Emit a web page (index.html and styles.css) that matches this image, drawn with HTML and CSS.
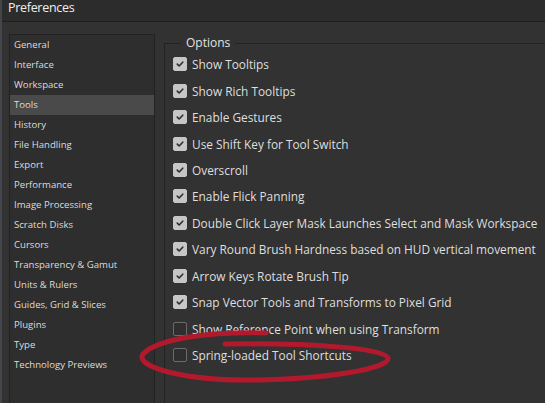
FILE: index.html
```html
<!DOCTYPE html>
<html>
<head>
<meta charset="utf-8">
<link rel="stylesheet" href="styles.css">
</head>
<body>
<div class="window">
  <div class="titlebar">Preferences</div>
  <div class="main">
    <ul class="nav">
      <li>General</li>
      <li>Interface</li>
      <li>Workspace</li>
      <li class="active">Tools</li>
      <li>History</li>
      <li>File Handling</li>
      <li>Export</li>
      <li>Performance</li>
      <li>Image Processing</li>
      <li>Scratch Disks</li>
      <li>Cursors</li>
      <li>Transparency &amp; Gamut</li>
      <li>Units &amp; Rulers</li>
      <li>Guides, Grid &amp; Slices</li>
      <li>Plugins</li>
      <li>Type</li>
      <li>Technology Previews</li>
    </ul>
    <fieldset class="options">
      <legend>Options</legend>
      <div class="row"><span class="cb on"><svg viewBox="0 0 14 14"><path d="M3.8 7.2 L6 9.3 L10.2 4.9"/></svg></span><span class="lbl">Show Tooltips</span></div>
      <div class="row"><span class="cb on"><svg viewBox="0 0 14 14"><path d="M3.8 7.2 L6 9.3 L10.2 4.9"/></svg></span><span class="lbl">Show Rich Tooltips</span></div>
      <div class="row"><span class="cb on"><svg viewBox="0 0 14 14"><path d="M3.8 7.2 L6 9.3 L10.2 4.9"/></svg></span><span class="lbl">Enable Gestures</span></div>
      <div class="row"><span class="cb on"><svg viewBox="0 0 14 14"><path d="M3.8 7.2 L6 9.3 L10.2 4.9"/></svg></span><span class="lbl">Use Shift Key for Tool Switch</span></div>
      <div class="row"><span class="cb on"><svg viewBox="0 0 14 14"><path d="M3.8 7.2 L6 9.3 L10.2 4.9"/></svg></span><span class="lbl">Overscroll</span></div>
      <div class="row"><span class="cb on"><svg viewBox="0 0 14 14"><path d="M3.8 7.2 L6 9.3 L10.2 4.9"/></svg></span><span class="lbl">Enable Flick Panning</span></div>
      <div class="row"><span class="cb on"><svg viewBox="0 0 14 14"><path d="M3.8 7.2 L6 9.3 L10.2 4.9"/></svg></span><span class="lbl">Double Click Layer Mask Launches Select and Mask Workspace</span></div>
      <div class="row"><span class="cb on"><svg viewBox="0 0 14 14"><path d="M3.8 7.2 L6 9.3 L10.2 4.9"/></svg></span><span class="lbl">Vary Round Brush Hardness based on HUD vertical movement</span></div>
      <div class="row"><span class="cb on"><svg viewBox="0 0 14 14"><path d="M3.8 7.2 L6 9.3 L10.2 4.9"/></svg></span><span class="lbl">Arrow Keys Rotate Brush Tip</span></div>
      <div class="row"><span class="cb on"><svg viewBox="0 0 14 14"><path d="M3.8 7.2 L6 9.3 L10.2 4.9"/></svg></span><span class="lbl">Snap Vector Tools and Transforms to Pixel Grid</span></div>
      <div class="row"><span class="cb"></span><span class="lbl">Show Reference Point when using Transform</span></div>
      <div class="row"><span class="cb"></span><span class="lbl">Spring-loaded Tool Shortcuts</span></div>
    </fieldset>
  </div>
  <svg class="mark" viewBox="0 0 545 403" width="545" height="403">
    <path class="ink" d="M266 333 C 215 331, 158 338, 143 354 C 134 367, 185 381, 255 380 C 325 379, 390 369, 388 358 C 386 348, 310 343, 225 344"/>
  </svg>
</div>
</body>
</html>
```

FILE: styles.css
```css
html, body {
  margin: 0;
  padding: 0;
  background: #323232;
  overflow: hidden;
}
.window {
  position: relative;
  width: 545px;
  height: 403px;
  box-sizing: border-box;
  border-left: 2px solid #44464c;
  overflow: hidden;
  font-family: "Open Sans", "Noto Sans", sans-serif;
  color: #dedede;
}
.titlebar {
  height: 21px;
  border-bottom: 1px solid #1e1e1e;
  background: #2c2c2c;
  box-sizing: content-box;
  padding-left: 6px;
  font-size: 12.5px;
  letter-spacing: -0.3px;
  line-height: 16px;
  color: #efefef;
}
.main {
  display: flex;
  height: 381px;
  align-items: stretch;
}
.nav {
  list-style: none;
  margin: 12px 0 -20px 7px;
  padding: 0;
  width: 146px;
  box-sizing: border-box;
  border: 1px solid #222;
  background: #2e2e2e;
  font-size: 9.6px;
  flex: none;
}
.nav li {
  height: 20px;
  line-height: 19px;
  padding-left: 4px;
  color: #dcdcdc;
}
.nav li.active {
  background: #4a4a4a;
}
.options {
  flex: none;
  width: 420px;
  margin: 13px 0 -20px 9px;
  padding: 0 0 0 8px;
  border: 1px solid #222;
  min-width: 0;
}
.options legend {
  margin-left: 8px;
  padding: 0 5px;
  font-size: 12px;
  line-height: 16px;
  color: #e2e2e2;
}
.row {
  height: 26.45px;
  display: flex;
  align-items: center;
  gap: 5px;
  font-size: 11.85px;
  white-space: nowrap;
}
.cb {
  width: 14px;
  height: 14px;
  box-sizing: border-box;
  border-radius: 2px;
  border: 1px solid #6b6b6b;
  background: #2f2f2f;
  flex: none;
  display: block;
}
.cb.on {
  background: #c6c6c6;
  border-color: #c6c6c6;
}
.cb svg {
  display: block;
  width: 12px;
  height: 12px;
}
.cb svg path {
  fill: none;
  stroke: #2e2e2e;
  stroke-width: 1.9;
  stroke-linecap: round;
  stroke-linejoin: round;
}
.lbl {
  color: #dfdfdf;
}
.mark {
  position: absolute;
  left: -2px;
  top: 0;
  pointer-events: none;
}
.ink {
  fill: none;
  stroke: #b3192d;
  stroke-width: 5;
  stroke-linecap: round;
  stroke-linejoin: round;
}
```
